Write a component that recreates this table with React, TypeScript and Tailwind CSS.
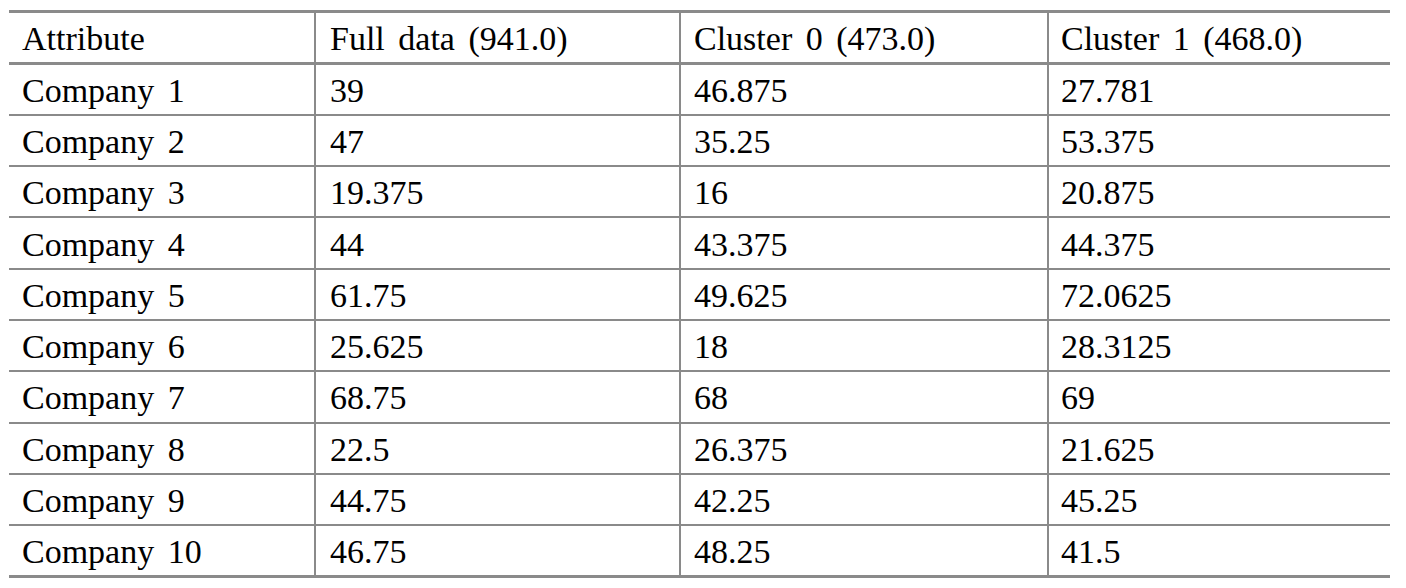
import React from "react";

const headers = ["Attribute", "Full data (941.0)", "Cluster 0 (473.0)", "Cluster 1 (468.0)"];
const rows: string[][] = [
  ["Company 1", "39", "46.875", "27.781"],
  ["Company 2", "47", "35.25", "53.375"],
  ["Company 3", "19.375", "16", "20.875"],
  ["Company 4", "44", "43.375", "44.375"],
  ["Company 5", "61.75", "49.625", "72.0625"],
  ["Company 6", "25.625", "18", "28.3125"],
  ["Company 7", "68.75", "68", "69"],
  ["Company 8", "22.5", "26.375", "21.625"],
  ["Company 9", "44.75", "42.25", "45.25"],
  ["Company 10", "46.75", "48.25", "41.5"],
];

const pads = ["pl-[13px]", "pl-[14px]", "pl-[13px]", "pl-[12px]"];

export default function App() {
  return (
    <div className="w-[1406px] h-[588px] bg-white pt-[10px] pl-[9px]">
      <table
        className="w-[1381px] border-collapse table-fixed text-[34px] text-black [word-spacing:5px] leading-none"
        style={{ fontFamily: '"Liberation Serif", "Times New Roman", serif' }}
      >
        <colgroup>
          <col className="w-[306px]" />
          <col className="w-[365px]" />
          <col className="w-[368px]" />
          <col className="w-[342px]" />
        </colgroup>
        <thead>
          <tr className="border-t-[3px] border-b-[3px] border-[#8a8a8a] h-[52px]">
            {headers.map((h, i) => (
              <th
                key={h}
                className={`font-normal text-left align-middle pt-[2px] ${pads[i]} ${i > 0 ? "border-l-2 border-[#8a8a8a]" : ""}`}
              >
                {h}
              </th>
            ))}
          </tr>
        </thead>
        <tbody>
          {rows.map((r, ri) => (
            <tr
              key={ri}
              className={`${ri === rows.length - 1 ? "border-b-[3px]" : "border-b-2"} border-[#8a8a8a] h-[51.3px]`}
            >
              {r.map((c, i) => (
                <td
                  key={i}
                  className={`align-middle pt-[3px] ${pads[i]} ${i > 0 ? "border-l-2 border-[#8a8a8a]" : ""}`}
                >
                  {c}
                </td>
              ))}
            </tr>
          ))}
        </tbody>
      </table>
    </div>
  );
}
